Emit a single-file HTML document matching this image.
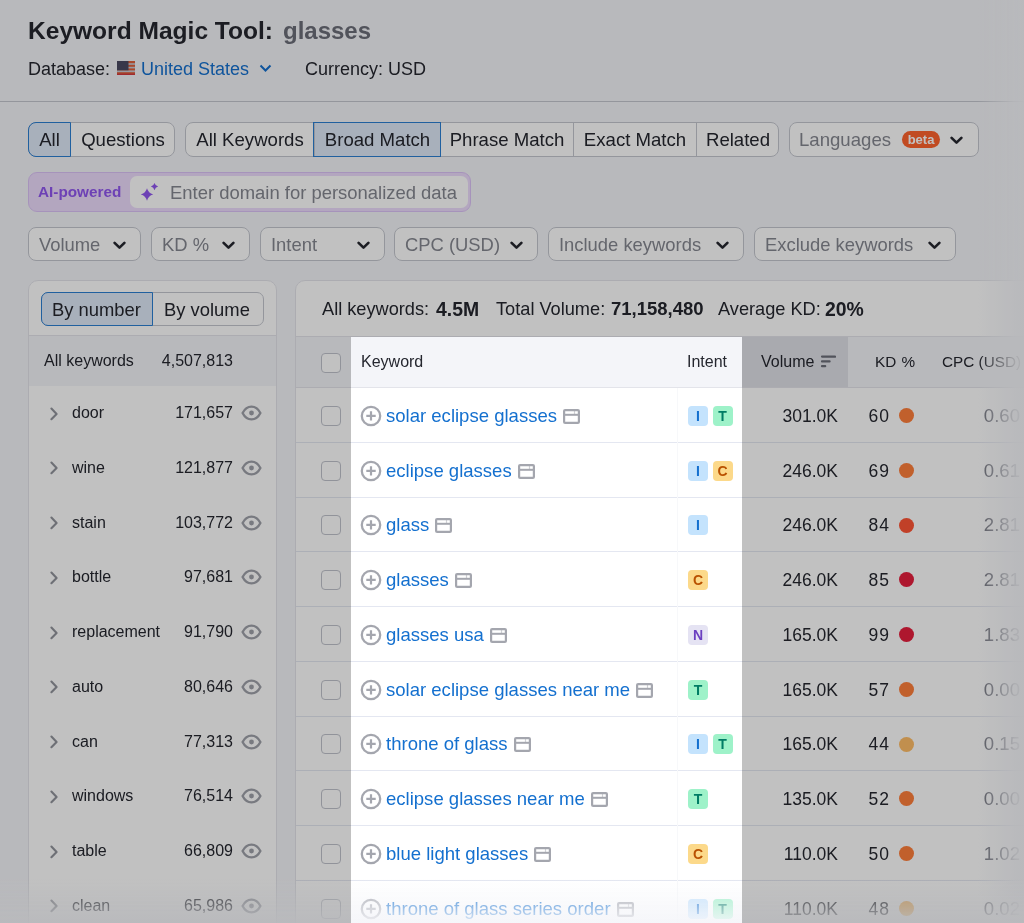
<!DOCTYPE html>
<html><head><meta charset="utf-8">
<style>
*{box-sizing:border-box;margin:0;padding:0}
html,body{width:1024px;height:923px;overflow:hidden}
body{will-change:transform;background:#f4f5f9;font-family:"Liberation Sans",sans-serif;color:#25272f;position:relative}
.a{position:absolute;white-space:nowrap}
.btn{position:absolute;height:35px;border:1px solid #c4c7cf;background:#fff;border-radius:8px;font-size:18.6px;line-height:34px;color:#25272f}
.seg{position:absolute;top:0;height:33px;line-height:34px;text-align:center;border-left:1px solid #c4c7cf}
.sel{background:#dfe9f7;outline:1px solid #2b7fd3;z-index:1}
.dd{position:absolute;top:227px;height:34px;border:1px solid #c4c7cf;background:#fff;border-radius:8px;font-size:18px;line-height:33px;color:#858790}
.dd span{position:absolute;left:10px;top:0;font-size:18.4px}
.chev{position:absolute;top:13px;width:13px;height:9px}
</style></head><body>

<!-- header -->
<div class="a" style="left:28px;top:16px;font-size:24.55px;font-weight:700;line-height:30px">Keyword Magic Tool:</div>
<div class="a" style="left:283px;top:16px;font-size:24px;font-weight:700;line-height:30px;color:#6c6e79">glasses</div>
<div class="a" style="left:28px;top:58px;font-size:18px;line-height:22px;color:#25272f">Database:</div>
<svg class="a" style="left:117px;top:61px" width="18" height="14" viewBox="0 0 18 14"><rect width="18" height="14" fill="#e0603a"/><rect y="2.2" width="18" height="1.6" fill="#c9ccd6"/><rect y="5.8" width="18" height="1.6" fill="#c9ccd6"/><rect y="9.4" width="18" height="1.8" fill="#c9ccd6"/><rect y="12.6" width="18" height="1.4" fill="#d43a40"/><rect width="11.5" height="9.3" fill="#4a4a62"/></svg>
<div class="a" style="left:141px;top:58px;font-size:18px;line-height:22px;color:#1470cf">United States</div>
<svg class="a" style="left:259px;top:64px" width="13" height="9" viewBox="0 0 13 9"><path d="M1.5 1.5 L6.5 6.5 L11.5 1.5" fill="none" stroke="#1470cf" stroke-width="2"/></svg>
<div class="a" style="left:305px;top:58px;font-size:18px;line-height:22px">Currency: USD</div>
<div class="a" style="left:0;top:101px;width:1024px;height:1px;background:#c4c7cf"></div>

<!-- buttons row -->
<div class="btn" style="left:28px;top:122px;width:147px">
  <div class="seg sel" style="left:0;width:41px;border-left:0;border-radius:7px 0 0 7px">All</div>
  <div class="seg" style="left:41px;width:105px">Questions</div>
</div>
<div class="btn" style="left:185px;top:122px;width:594px">
  <div class="seg" style="left:0;width:128px;border-left:0">All Keywords</div>
  <div class="seg sel" style="left:128px;width:126px">Broad Match</div>
  <div class="seg" style="left:254px;width:133px">Phrase Match</div>
  <div class="seg" style="left:387px;width:123px">Exact Match</div>
  <div class="seg" style="left:510px;width:83px">Related</div>
</div>
<div class="btn" style="left:789px;top:122px;width:190px;color:#858790">
  <span class="a" style="left:9px;top:0">Languages</span>
  <span class="a" style="left:112px;top:8px;width:38px;height:17px;border-radius:9px;background:#ff642d;color:#fff;font-size:13px;font-weight:700;line-height:17px;text-align:center">beta</span>
  <svg class="chev" style="left:160px" viewBox="0 0 13 9"><path d="M1.6 1.8 L6.5 6.7 L11.4 1.8" fill="none" stroke="#25272f" stroke-width="2.6" stroke-linecap="round" stroke-linejoin="round"/></svg>
</div>

<!-- AI row -->
<div class="a" style="left:28px;top:172px;width:443px;height:40px;border-radius:9px;background:#eddcfd;border:1px solid #dcc3f7"></div>
<div class="a" style="left:38px;top:182px;font-size:15.3px;font-weight:700;line-height:20px;color:#9157f0">AI-powered</div>
<div class="a" style="left:130px;top:176px;width:338px;height:32px;border-radius:7px;background:#fff"></div>
<svg class="a" style="left:134px;top:176px" width="26" height="26" viewBox="0 0 26 26"><path d="M13 12.3 Q14.3 17.2 19.2 18.5 Q14.3 19.8 13 24.7 Q11.7 19.8 6.8 18.5 Q11.7 17.2 13 12.3Z M20.5 7 Q21.3 9.8 24.1 10.6 Q21.3 11.4 20.5 14.2 Q19.7 11.4 16.9 10.6 Q19.7 9.8 20.5 7Z" fill="#9157f0"/></svg>
<div class="a" style="left:170px;top:181.5px;font-size:18.45px;line-height:22px;color:#858790">Enter domain for personalized data</div>

<!-- filter row -->
<div class="dd" style="left:28px;width:113px"><span>Volume</span><svg class="chev" style="left:84px" viewBox="0 0 13 9"><path d="M1.6 1.8 L6.5 6.7 L11.4 1.8" fill="none" stroke="#25272f" stroke-width="2.6" stroke-linecap="round" stroke-linejoin="round"/></svg></div>
<div class="dd" style="left:151px;width:99px"><span>KD %</span><svg class="chev" style="left:70px" viewBox="0 0 13 9"><path d="M1.6 1.8 L6.5 6.7 L11.4 1.8" fill="none" stroke="#25272f" stroke-width="2.6" stroke-linecap="round" stroke-linejoin="round"/></svg></div>
<div class="dd" style="left:260px;width:125px"><span>Intent</span><svg class="chev" style="left:96px" viewBox="0 0 13 9"><path d="M1.6 1.8 L6.5 6.7 L11.4 1.8" fill="none" stroke="#25272f" stroke-width="2.6" stroke-linecap="round" stroke-linejoin="round"/></svg></div>
<div class="dd" style="left:394px;width:144px"><span>CPC (USD)</span><svg class="chev" style="left:115px" viewBox="0 0 13 9"><path d="M1.6 1.8 L6.5 6.7 L11.4 1.8" fill="none" stroke="#25272f" stroke-width="2.6" stroke-linecap="round" stroke-linejoin="round"/></svg></div>
<div class="dd" style="left:548px;width:196px"><span>Include keywords</span><svg class="chev" style="left:167px" viewBox="0 0 13 9"><path d="M1.6 1.8 L6.5 6.7 L11.4 1.8" fill="none" stroke="#25272f" stroke-width="2.6" stroke-linecap="round" stroke-linejoin="round"/></svg></div>
<div class="dd" style="left:754px;width:202px"><span>Exclude keywords</span><svg class="chev" style="left:173px" viewBox="0 0 13 9"><path d="M1.6 1.8 L6.5 6.7 L11.4 1.8" fill="none" stroke="#25272f" stroke-width="2.6" stroke-linecap="round" stroke-linejoin="round"/></svg></div>


<div class="a" style="left:28px;top:280px;width:249px;height:700px;background:#fff;border:1px solid #e3e4ea;border-radius:10px"></div>
<div class="a" style="left:41px;top:292px;width:223px;height:34px;border:1px solid #c4c7cf;border-radius:7px;background:#fff"></div>
<div class="a" style="left:41px;top:292px;width:112px;height:34px;border:1px solid #2b7fd3;border-radius:7px 0 0 7px;background:#dfe9f7"></div>
<div class="a" style="left:52px;top:298px;font-size:18.4px;line-height:24px">By number</div>
<div class="a" style="left:164px;top:298px;font-size:18.4px;line-height:24px">By volume</div>
<div class="a" style="left:29px;top:335px;width:247px;height:51px;background:#f4f5f9;border-top:1px solid #e3e4ea"></div>
<div class="a" style="left:44px;top:351px;font-size:16px;line-height:20px">All keywords</div>
<div class="a" style="left:132px;top:351px;width:101px;text-align:right;font-size:16px;line-height:20px">4,507,813</div>
<svg class="a" style="left:49px;top:406.50px" width="10" height="14" viewBox="0 0 10 14"><path d="M2.4 1.6 L7.6 6.9 L2.4 12.2" fill="none" stroke="#92949c" stroke-width="2.1" stroke-linecap="round" stroke-linejoin="round"/></svg>
<div class="a" style="left:72px;top:403.00px;font-size:16px;line-height:20px">door</div>
<div class="a" style="left:132px;top:403.00px;width:101px;text-align:right;font-size:16px;line-height:20px">171,657</div>
<svg class="a" style="left:241px;top:405.00px" width="21" height="16" viewBox="0 0 21 16"><path d="M1.6 8 C3.8 3.6 7 1.6 10.5 1.6 C14 1.6 17.2 3.6 19.4 8 C17.2 12.4 14 14.4 10.5 14.4 C7 14.4 3.8 12.4 1.6 8Z" fill="none" stroke="#9fa1aa" stroke-width="2.3"/><circle cx="10.5" cy="8" r="2.4" fill="#9fa1aa"/></svg>
<svg class="a" style="left:49px;top:461.25px" width="10" height="14" viewBox="0 0 10 14"><path d="M2.4 1.6 L7.6 6.9 L2.4 12.2" fill="none" stroke="#92949c" stroke-width="2.1" stroke-linecap="round" stroke-linejoin="round"/></svg>
<div class="a" style="left:72px;top:457.75px;font-size:16px;line-height:20px">wine</div>
<div class="a" style="left:132px;top:457.75px;width:101px;text-align:right;font-size:16px;line-height:20px">121,877</div>
<svg class="a" style="left:241px;top:459.75px" width="21" height="16" viewBox="0 0 21 16"><path d="M1.6 8 C3.8 3.6 7 1.6 10.5 1.6 C14 1.6 17.2 3.6 19.4 8 C17.2 12.4 14 14.4 10.5 14.4 C7 14.4 3.8 12.4 1.6 8Z" fill="none" stroke="#9fa1aa" stroke-width="2.3"/><circle cx="10.5" cy="8" r="2.4" fill="#9fa1aa"/></svg>
<svg class="a" style="left:49px;top:516.00px" width="10" height="14" viewBox="0 0 10 14"><path d="M2.4 1.6 L7.6 6.9 L2.4 12.2" fill="none" stroke="#92949c" stroke-width="2.1" stroke-linecap="round" stroke-linejoin="round"/></svg>
<div class="a" style="left:72px;top:512.50px;font-size:16px;line-height:20px">stain</div>
<div class="a" style="left:132px;top:512.50px;width:101px;text-align:right;font-size:16px;line-height:20px">103,772</div>
<svg class="a" style="left:241px;top:514.50px" width="21" height="16" viewBox="0 0 21 16"><path d="M1.6 8 C3.8 3.6 7 1.6 10.5 1.6 C14 1.6 17.2 3.6 19.4 8 C17.2 12.4 14 14.4 10.5 14.4 C7 14.4 3.8 12.4 1.6 8Z" fill="none" stroke="#9fa1aa" stroke-width="2.3"/><circle cx="10.5" cy="8" r="2.4" fill="#9fa1aa"/></svg>
<svg class="a" style="left:49px;top:570.75px" width="10" height="14" viewBox="0 0 10 14"><path d="M2.4 1.6 L7.6 6.9 L2.4 12.2" fill="none" stroke="#92949c" stroke-width="2.1" stroke-linecap="round" stroke-linejoin="round"/></svg>
<div class="a" style="left:72px;top:567.25px;font-size:16px;line-height:20px">bottle</div>
<div class="a" style="left:132px;top:567.25px;width:101px;text-align:right;font-size:16px;line-height:20px">97,681</div>
<svg class="a" style="left:241px;top:569.25px" width="21" height="16" viewBox="0 0 21 16"><path d="M1.6 8 C3.8 3.6 7 1.6 10.5 1.6 C14 1.6 17.2 3.6 19.4 8 C17.2 12.4 14 14.4 10.5 14.4 C7 14.4 3.8 12.4 1.6 8Z" fill="none" stroke="#9fa1aa" stroke-width="2.3"/><circle cx="10.5" cy="8" r="2.4" fill="#9fa1aa"/></svg>
<svg class="a" style="left:49px;top:625.50px" width="10" height="14" viewBox="0 0 10 14"><path d="M2.4 1.6 L7.6 6.9 L2.4 12.2" fill="none" stroke="#92949c" stroke-width="2.1" stroke-linecap="round" stroke-linejoin="round"/></svg>
<div class="a" style="left:72px;top:622.00px;font-size:16px;line-height:20px">replacement</div>
<div class="a" style="left:132px;top:622.00px;width:101px;text-align:right;font-size:16px;line-height:20px">91,790</div>
<svg class="a" style="left:241px;top:624.00px" width="21" height="16" viewBox="0 0 21 16"><path d="M1.6 8 C3.8 3.6 7 1.6 10.5 1.6 C14 1.6 17.2 3.6 19.4 8 C17.2 12.4 14 14.4 10.5 14.4 C7 14.4 3.8 12.4 1.6 8Z" fill="none" stroke="#9fa1aa" stroke-width="2.3"/><circle cx="10.5" cy="8" r="2.4" fill="#9fa1aa"/></svg>
<svg class="a" style="left:49px;top:680.25px" width="10" height="14" viewBox="0 0 10 14"><path d="M2.4 1.6 L7.6 6.9 L2.4 12.2" fill="none" stroke="#92949c" stroke-width="2.1" stroke-linecap="round" stroke-linejoin="round"/></svg>
<div class="a" style="left:72px;top:676.75px;font-size:16px;line-height:20px">auto</div>
<div class="a" style="left:132px;top:676.75px;width:101px;text-align:right;font-size:16px;line-height:20px">80,646</div>
<svg class="a" style="left:241px;top:678.75px" width="21" height="16" viewBox="0 0 21 16"><path d="M1.6 8 C3.8 3.6 7 1.6 10.5 1.6 C14 1.6 17.2 3.6 19.4 8 C17.2 12.4 14 14.4 10.5 14.4 C7 14.4 3.8 12.4 1.6 8Z" fill="none" stroke="#9fa1aa" stroke-width="2.3"/><circle cx="10.5" cy="8" r="2.4" fill="#9fa1aa"/></svg>
<svg class="a" style="left:49px;top:735.00px" width="10" height="14" viewBox="0 0 10 14"><path d="M2.4 1.6 L7.6 6.9 L2.4 12.2" fill="none" stroke="#92949c" stroke-width="2.1" stroke-linecap="round" stroke-linejoin="round"/></svg>
<div class="a" style="left:72px;top:731.50px;font-size:16px;line-height:20px">can</div>
<div class="a" style="left:132px;top:731.50px;width:101px;text-align:right;font-size:16px;line-height:20px">77,313</div>
<svg class="a" style="left:241px;top:733.50px" width="21" height="16" viewBox="0 0 21 16"><path d="M1.6 8 C3.8 3.6 7 1.6 10.5 1.6 C14 1.6 17.2 3.6 19.4 8 C17.2 12.4 14 14.4 10.5 14.4 C7 14.4 3.8 12.4 1.6 8Z" fill="none" stroke="#9fa1aa" stroke-width="2.3"/><circle cx="10.5" cy="8" r="2.4" fill="#9fa1aa"/></svg>
<svg class="a" style="left:49px;top:789.75px" width="10" height="14" viewBox="0 0 10 14"><path d="M2.4 1.6 L7.6 6.9 L2.4 12.2" fill="none" stroke="#92949c" stroke-width="2.1" stroke-linecap="round" stroke-linejoin="round"/></svg>
<div class="a" style="left:72px;top:786.25px;font-size:16px;line-height:20px">windows</div>
<div class="a" style="left:132px;top:786.25px;width:101px;text-align:right;font-size:16px;line-height:20px">76,514</div>
<svg class="a" style="left:241px;top:788.25px" width="21" height="16" viewBox="0 0 21 16"><path d="M1.6 8 C3.8 3.6 7 1.6 10.5 1.6 C14 1.6 17.2 3.6 19.4 8 C17.2 12.4 14 14.4 10.5 14.4 C7 14.4 3.8 12.4 1.6 8Z" fill="none" stroke="#9fa1aa" stroke-width="2.3"/><circle cx="10.5" cy="8" r="2.4" fill="#9fa1aa"/></svg>
<svg class="a" style="left:49px;top:844.50px" width="10" height="14" viewBox="0 0 10 14"><path d="M2.4 1.6 L7.6 6.9 L2.4 12.2" fill="none" stroke="#92949c" stroke-width="2.1" stroke-linecap="round" stroke-linejoin="round"/></svg>
<div class="a" style="left:72px;top:841.00px;font-size:16px;line-height:20px">table</div>
<div class="a" style="left:132px;top:841.00px;width:101px;text-align:right;font-size:16px;line-height:20px">66,809</div>
<svg class="a" style="left:241px;top:843.00px" width="21" height="16" viewBox="0 0 21 16"><path d="M1.6 8 C3.8 3.6 7 1.6 10.5 1.6 C14 1.6 17.2 3.6 19.4 8 C17.2 12.4 14 14.4 10.5 14.4 C7 14.4 3.8 12.4 1.6 8Z" fill="none" stroke="#9fa1aa" stroke-width="2.3"/><circle cx="10.5" cy="8" r="2.4" fill="#9fa1aa"/></svg>
<svg class="a" style="left:49px;top:899.25px" width="10" height="14" viewBox="0 0 10 14"><path d="M2.4 1.6 L7.6 6.9 L2.4 12.2" fill="none" stroke="#92949c" stroke-width="2.1" stroke-linecap="round" stroke-linejoin="round"/></svg>
<div class="a" style="left:72px;top:895.75px;font-size:16px;line-height:20px">clean</div>
<div class="a" style="left:132px;top:895.75px;width:101px;text-align:right;font-size:16px;line-height:20px">65,986</div>
<svg class="a" style="left:241px;top:897.75px" width="21" height="16" viewBox="0 0 21 16"><path d="M1.6 8 C3.8 3.6 7 1.6 10.5 1.6 C14 1.6 17.2 3.6 19.4 8 C17.2 12.4 14 14.4 10.5 14.4 C7 14.4 3.8 12.4 1.6 8Z" fill="none" stroke="#9fa1aa" stroke-width="2.3"/><circle cx="10.5" cy="8" r="2.4" fill="#9fa1aa"/></svg>
<div class="a" style="left:295px;top:280px;width:800px;height:700px;background:#fff;border:1px solid #e3e4ea;border-radius:10px"></div>
<div class="a" style="left:322px;top:298px;font-size:18.2px;line-height:22px">All keywords:</div>
<div class="a" style="left:436px;top:298px;font-size:19.4px;line-height:22px;font-weight:700">4.5M</div>
<div class="a" style="left:496px;top:298px;font-size:18.2px;line-height:22px">Total Volume:</div>
<div class="a" style="left:611px;top:298px;font-size:18.5px;line-height:22px;font-weight:700">71,158,480</div>
<div class="a" style="left:718px;top:298px;font-size:18.2px;line-height:22px">Average KD:</div>
<div class="a" style="left:825px;top:298px;font-size:19.4px;line-height:22px;font-weight:700">20%</div>
<div class="a" style="left:296px;top:336px;width:800px;height:52px;background:#f4f5f9;border-top:1px solid #e3e4ea;border-bottom:1px solid #e3e4ea"></div>
<div class="a" style="left:742px;top:337px;width:106px;height:50px;background:#e0e1e8"></div>
<div class="a" style="left:321px;top:353px;width:20px;height:20px;border:1.5px solid #c0c3cc;border-radius:4px;background:#fff"></div>
<div class="a" style="left:361px;top:351.5px;font-size:16px;line-height:20px">Keyword</div>
<div class="a" style="left:687px;top:351.5px;font-size:16px;line-height:20px">Intent</div>
<div class="a" style="left:761px;top:351.5px;font-size:16px;line-height:20px">Volume</div>
<svg class="a" style="left:820px;top:354.5px" width="16" height="13" viewBox="0 0 16 13"><path d="M2 1.6H15M2 6.4H9.6M2 11.2H5.2" stroke="#6c6e79" stroke-width="2.2" stroke-linecap="round"/></svg>
<div class="a" style="left:875px;top:352px;font-size:15.3px;line-height:20px;word-spacing:1px">KD %</div>
<div class="a" style="left:942px;top:352px;font-size:15.3px;line-height:20px">CPC (USD)</div>
<div class="a" style="left:296px;top:441.75px;width:800px;height:1px;background:#e4e7f1"></div>
<div class="a" style="left:321px;top:405.90px;width:20px;height:20px;border:1.5px solid #c0c3cc;border-radius:4px;background:#fff"></div>
<svg class="a" style="left:360px;top:404.90px" width="22" height="22" viewBox="0 0 22 22"><circle cx="11" cy="11" r="9.2" fill="none" stroke="#a4a6ae" stroke-width="2.3"/><path d="M11 6.2V15.6M6.3 10.9H15.7" stroke="#a4a6ae" stroke-width="2.2"/></svg>
<div class="a" style="left:386px;top:404.90px;font-size:18.55px;line-height:22px;color:#1470cf"><span>solar eclipse glasses</span><svg style="display:inline-block;vertical-align:-2px;margin-left:6px" width="17" height="15" viewBox="0 0 17 15"><rect x="1.1" y="1.1" width="14.8" height="12.8" rx="1" fill="none" stroke="#a4a6ae" stroke-width="2.2"/><path d="M1 5.8H16" stroke="#a4a6ae" stroke-width="2"/><path d="M11.5 1V5.5" stroke="#a4a6ae" stroke-width="1.2" opacity=".5"/></svg></div>
<div class="a" style="left:688.0px;top:405.90px;width:20px;height:20px;border-radius:4px;background:#c4e3fd;color:#1470cf;font-size:14px;font-weight:700;line-height:20px;text-align:center">I</div>
<div class="a" style="left:712.6px;top:405.90px;width:20px;height:20px;border-radius:4px;background:#9ef2c9;color:#007c65;font-size:14px;font-weight:700;line-height:20px;text-align:center">T</div>
<div class="a" style="left:738px;top:404.90px;width:100px;text-align:right;font-size:17.5px;line-height:22px">301.0K</div>
<div class="a" style="left:840px;width:50px;text-align:right;top:404.90px;font-size:17.5px;line-height:22px;letter-spacing:1px">60</div>
<div class="a" style="left:899px;top:408.10px;width:15px;height:15px;border-radius:50%;background:#ff7f3b"></div>
<div class="a" style="left:921px;top:404.90px;width:99px;text-align:right;font-size:18.6px;line-height:22px;color:#6c6e79">0.60</div>
<div class="a" style="left:296px;top:496.50px;width:800px;height:1px;background:#e4e7f1"></div>
<div class="a" style="left:321px;top:460.65px;width:20px;height:20px;border:1.5px solid #c0c3cc;border-radius:4px;background:#fff"></div>
<svg class="a" style="left:360px;top:459.65px" width="22" height="22" viewBox="0 0 22 22"><circle cx="11" cy="11" r="9.2" fill="none" stroke="#a4a6ae" stroke-width="2.3"/><path d="M11 6.2V15.6M6.3 10.9H15.7" stroke="#a4a6ae" stroke-width="2.2"/></svg>
<div class="a" style="left:386px;top:459.65px;font-size:18.55px;line-height:22px;color:#1470cf"><span>eclipse glasses</span><svg style="display:inline-block;vertical-align:-2px;margin-left:6px" width="17" height="15" viewBox="0 0 17 15"><rect x="1.1" y="1.1" width="14.8" height="12.8" rx="1" fill="none" stroke="#a4a6ae" stroke-width="2.2"/><path d="M1 5.8H16" stroke="#a4a6ae" stroke-width="2"/><path d="M11.5 1V5.5" stroke="#a4a6ae" stroke-width="1.2" opacity=".5"/></svg></div>
<div class="a" style="left:688.0px;top:460.65px;width:20px;height:20px;border-radius:4px;background:#c4e3fd;color:#1470cf;font-size:14px;font-weight:700;line-height:20px;text-align:center">I</div>
<div class="a" style="left:712.6px;top:460.65px;width:20px;height:20px;border-radius:4px;background:#fcd98a;color:#b95100;font-size:14px;font-weight:700;line-height:20px;text-align:center">C</div>
<div class="a" style="left:738px;top:459.65px;width:100px;text-align:right;font-size:17.5px;line-height:22px">246.0K</div>
<div class="a" style="left:840px;width:50px;text-align:right;top:459.65px;font-size:17.5px;line-height:22px;letter-spacing:1px">69</div>
<div class="a" style="left:899px;top:462.85px;width:15px;height:15px;border-radius:50%;background:#ff7f3b"></div>
<div class="a" style="left:921px;top:459.65px;width:99px;text-align:right;font-size:18.6px;line-height:22px;color:#6c6e79">0.61</div>
<div class="a" style="left:296px;top:551.25px;width:800px;height:1px;background:#e4e7f1"></div>
<div class="a" style="left:321px;top:515.40px;width:20px;height:20px;border:1.5px solid #c0c3cc;border-radius:4px;background:#fff"></div>
<svg class="a" style="left:360px;top:514.40px" width="22" height="22" viewBox="0 0 22 22"><circle cx="11" cy="11" r="9.2" fill="none" stroke="#a4a6ae" stroke-width="2.3"/><path d="M11 6.2V15.6M6.3 10.9H15.7" stroke="#a4a6ae" stroke-width="2.2"/></svg>
<div class="a" style="left:386px;top:514.40px;font-size:18.55px;line-height:22px;color:#1470cf"><span>glass</span><svg style="display:inline-block;vertical-align:-2px;margin-left:6px" width="17" height="15" viewBox="0 0 17 15"><rect x="1.1" y="1.1" width="14.8" height="12.8" rx="1" fill="none" stroke="#a4a6ae" stroke-width="2.2"/><path d="M1 5.8H16" stroke="#a4a6ae" stroke-width="2"/><path d="M11.5 1V5.5" stroke="#a4a6ae" stroke-width="1.2" opacity=".5"/></svg></div>
<div class="a" style="left:688.0px;top:515.40px;width:20px;height:20px;border-radius:4px;background:#c4e3fd;color:#1470cf;font-size:14px;font-weight:700;line-height:20px;text-align:center">I</div>
<div class="a" style="left:738px;top:514.40px;width:100px;text-align:right;font-size:17.5px;line-height:22px">246.0K</div>
<div class="a" style="left:840px;width:50px;text-align:right;top:514.40px;font-size:17.5px;line-height:22px;letter-spacing:1px">84</div>
<div class="a" style="left:899px;top:517.60px;width:15px;height:15px;border-radius:50%;background:#ff5535"></div>
<div class="a" style="left:921px;top:514.40px;width:99px;text-align:right;font-size:18.6px;line-height:22px;color:#6c6e79">2.81</div>
<div class="a" style="left:296px;top:606.00px;width:800px;height:1px;background:#e4e7f1"></div>
<div class="a" style="left:321px;top:570.15px;width:20px;height:20px;border:1.5px solid #c0c3cc;border-radius:4px;background:#fff"></div>
<svg class="a" style="left:360px;top:569.15px" width="22" height="22" viewBox="0 0 22 22"><circle cx="11" cy="11" r="9.2" fill="none" stroke="#a4a6ae" stroke-width="2.3"/><path d="M11 6.2V15.6M6.3 10.9H15.7" stroke="#a4a6ae" stroke-width="2.2"/></svg>
<div class="a" style="left:386px;top:569.15px;font-size:18.55px;line-height:22px;color:#1470cf"><span>glasses</span><svg style="display:inline-block;vertical-align:-2px;margin-left:6px" width="17" height="15" viewBox="0 0 17 15"><rect x="1.1" y="1.1" width="14.8" height="12.8" rx="1" fill="none" stroke="#a4a6ae" stroke-width="2.2"/><path d="M1 5.8H16" stroke="#a4a6ae" stroke-width="2"/><path d="M11.5 1V5.5" stroke="#a4a6ae" stroke-width="1.2" opacity=".5"/></svg></div>
<div class="a" style="left:688.0px;top:570.15px;width:20px;height:20px;border-radius:4px;background:#fcd98a;color:#b95100;font-size:14px;font-weight:700;line-height:20px;text-align:center">C</div>
<div class="a" style="left:738px;top:569.15px;width:100px;text-align:right;font-size:17.5px;line-height:22px">246.0K</div>
<div class="a" style="left:840px;width:50px;text-align:right;top:569.15px;font-size:17.5px;line-height:22px;letter-spacing:1px">85</div>
<div class="a" style="left:899px;top:572.35px;width:15px;height:15px;border-radius:50%;background:#e61f3e"></div>
<div class="a" style="left:921px;top:569.15px;width:99px;text-align:right;font-size:18.6px;line-height:22px;color:#6c6e79">2.81</div>
<div class="a" style="left:296px;top:660.75px;width:800px;height:1px;background:#e4e7f1"></div>
<div class="a" style="left:321px;top:624.90px;width:20px;height:20px;border:1.5px solid #c0c3cc;border-radius:4px;background:#fff"></div>
<svg class="a" style="left:360px;top:623.90px" width="22" height="22" viewBox="0 0 22 22"><circle cx="11" cy="11" r="9.2" fill="none" stroke="#a4a6ae" stroke-width="2.3"/><path d="M11 6.2V15.6M6.3 10.9H15.7" stroke="#a4a6ae" stroke-width="2.2"/></svg>
<div class="a" style="left:386px;top:623.90px;font-size:18.55px;line-height:22px;color:#1470cf"><span>glasses usa</span><svg style="display:inline-block;vertical-align:-2px;margin-left:6px" width="17" height="15" viewBox="0 0 17 15"><rect x="1.1" y="1.1" width="14.8" height="12.8" rx="1" fill="none" stroke="#a4a6ae" stroke-width="2.2"/><path d="M1 5.8H16" stroke="#a4a6ae" stroke-width="2"/><path d="M11.5 1V5.5" stroke="#a4a6ae" stroke-width="1.2" opacity=".5"/></svg></div>
<div class="a" style="left:688.0px;top:624.90px;width:20px;height:20px;border-radius:4px;background:#e5e3f3;color:#6b3fc0;font-size:14px;font-weight:700;line-height:20px;text-align:center">N</div>
<div class="a" style="left:738px;top:623.90px;width:100px;text-align:right;font-size:17.5px;line-height:22px">165.0K</div>
<div class="a" style="left:840px;width:50px;text-align:right;top:623.90px;font-size:17.5px;line-height:22px;letter-spacing:1px">99</div>
<div class="a" style="left:899px;top:627.10px;width:15px;height:15px;border-radius:50%;background:#e61f3e"></div>
<div class="a" style="left:921px;top:623.90px;width:99px;text-align:right;font-size:18.6px;line-height:22px;color:#6c6e79">1.83</div>
<div class="a" style="left:296px;top:715.50px;width:800px;height:1px;background:#e4e7f1"></div>
<div class="a" style="left:321px;top:679.65px;width:20px;height:20px;border:1.5px solid #c0c3cc;border-radius:4px;background:#fff"></div>
<svg class="a" style="left:360px;top:678.65px" width="22" height="22" viewBox="0 0 22 22"><circle cx="11" cy="11" r="9.2" fill="none" stroke="#a4a6ae" stroke-width="2.3"/><path d="M11 6.2V15.6M6.3 10.9H15.7" stroke="#a4a6ae" stroke-width="2.2"/></svg>
<div class="a" style="left:386px;top:678.65px;font-size:18.55px;line-height:22px;color:#1470cf"><span>solar eclipse glasses near me</span><svg style="display:inline-block;vertical-align:-2px;margin-left:6px" width="17" height="15" viewBox="0 0 17 15"><rect x="1.1" y="1.1" width="14.8" height="12.8" rx="1" fill="none" stroke="#a4a6ae" stroke-width="2.2"/><path d="M1 5.8H16" stroke="#a4a6ae" stroke-width="2"/><path d="M11.5 1V5.5" stroke="#a4a6ae" stroke-width="1.2" opacity=".5"/></svg></div>
<div class="a" style="left:688.0px;top:679.65px;width:20px;height:20px;border-radius:4px;background:#9ef2c9;color:#007c65;font-size:14px;font-weight:700;line-height:20px;text-align:center">T</div>
<div class="a" style="left:738px;top:678.65px;width:100px;text-align:right;font-size:17.5px;line-height:22px">165.0K</div>
<div class="a" style="left:840px;width:50px;text-align:right;top:678.65px;font-size:17.5px;line-height:22px;letter-spacing:1px">57</div>
<div class="a" style="left:899px;top:681.85px;width:15px;height:15px;border-radius:50%;background:#ff7f3b"></div>
<div class="a" style="left:921px;top:678.65px;width:99px;text-align:right;font-size:18.6px;line-height:22px;color:#6c6e79">0.00</div>
<div class="a" style="left:296px;top:770.25px;width:800px;height:1px;background:#e4e7f1"></div>
<div class="a" style="left:321px;top:734.40px;width:20px;height:20px;border:1.5px solid #c0c3cc;border-radius:4px;background:#fff"></div>
<svg class="a" style="left:360px;top:733.40px" width="22" height="22" viewBox="0 0 22 22"><circle cx="11" cy="11" r="9.2" fill="none" stroke="#a4a6ae" stroke-width="2.3"/><path d="M11 6.2V15.6M6.3 10.9H15.7" stroke="#a4a6ae" stroke-width="2.2"/></svg>
<div class="a" style="left:386px;top:733.40px;font-size:18.55px;line-height:22px;color:#1470cf"><span>throne of glass</span><svg style="display:inline-block;vertical-align:-2px;margin-left:6px" width="17" height="15" viewBox="0 0 17 15"><rect x="1.1" y="1.1" width="14.8" height="12.8" rx="1" fill="none" stroke="#a4a6ae" stroke-width="2.2"/><path d="M1 5.8H16" stroke="#a4a6ae" stroke-width="2"/><path d="M11.5 1V5.5" stroke="#a4a6ae" stroke-width="1.2" opacity=".5"/></svg></div>
<div class="a" style="left:688.0px;top:734.40px;width:20px;height:20px;border-radius:4px;background:#c4e3fd;color:#1470cf;font-size:14px;font-weight:700;line-height:20px;text-align:center">I</div>
<div class="a" style="left:712.6px;top:734.40px;width:20px;height:20px;border-radius:4px;background:#9ef2c9;color:#007c65;font-size:14px;font-weight:700;line-height:20px;text-align:center">T</div>
<div class="a" style="left:738px;top:733.40px;width:100px;text-align:right;font-size:17.5px;line-height:22px">165.0K</div>
<div class="a" style="left:840px;width:50px;text-align:right;top:733.40px;font-size:17.5px;line-height:22px;letter-spacing:1px">44</div>
<div class="a" style="left:899px;top:736.60px;width:15px;height:15px;border-radius:50%;background:#ffbe68"></div>
<div class="a" style="left:921px;top:733.40px;width:99px;text-align:right;font-size:18.6px;line-height:22px;color:#6c6e79">0.15</div>
<div class="a" style="left:296px;top:825.00px;width:800px;height:1px;background:#e4e7f1"></div>
<div class="a" style="left:321px;top:789.15px;width:20px;height:20px;border:1.5px solid #c0c3cc;border-radius:4px;background:#fff"></div>
<svg class="a" style="left:360px;top:788.15px" width="22" height="22" viewBox="0 0 22 22"><circle cx="11" cy="11" r="9.2" fill="none" stroke="#a4a6ae" stroke-width="2.3"/><path d="M11 6.2V15.6M6.3 10.9H15.7" stroke="#a4a6ae" stroke-width="2.2"/></svg>
<div class="a" style="left:386px;top:788.15px;font-size:18.55px;line-height:22px;color:#1470cf"><span>eclipse glasses near me</span><svg style="display:inline-block;vertical-align:-2px;margin-left:6px" width="17" height="15" viewBox="0 0 17 15"><rect x="1.1" y="1.1" width="14.8" height="12.8" rx="1" fill="none" stroke="#a4a6ae" stroke-width="2.2"/><path d="M1 5.8H16" stroke="#a4a6ae" stroke-width="2"/><path d="M11.5 1V5.5" stroke="#a4a6ae" stroke-width="1.2" opacity=".5"/></svg></div>
<div class="a" style="left:688.0px;top:789.15px;width:20px;height:20px;border-radius:4px;background:#9ef2c9;color:#007c65;font-size:14px;font-weight:700;line-height:20px;text-align:center">T</div>
<div class="a" style="left:738px;top:788.15px;width:100px;text-align:right;font-size:17.5px;line-height:22px">135.0K</div>
<div class="a" style="left:840px;width:50px;text-align:right;top:788.15px;font-size:17.5px;line-height:22px;letter-spacing:1px">52</div>
<div class="a" style="left:899px;top:791.35px;width:15px;height:15px;border-radius:50%;background:#ff7f3b"></div>
<div class="a" style="left:921px;top:788.15px;width:99px;text-align:right;font-size:18.6px;line-height:22px;color:#6c6e79">0.00</div>
<div class="a" style="left:296px;top:879.75px;width:800px;height:1px;background:#e4e7f1"></div>
<div class="a" style="left:321px;top:843.90px;width:20px;height:20px;border:1.5px solid #c0c3cc;border-radius:4px;background:#fff"></div>
<svg class="a" style="left:360px;top:842.90px" width="22" height="22" viewBox="0 0 22 22"><circle cx="11" cy="11" r="9.2" fill="none" stroke="#a4a6ae" stroke-width="2.3"/><path d="M11 6.2V15.6M6.3 10.9H15.7" stroke="#a4a6ae" stroke-width="2.2"/></svg>
<div class="a" style="left:386px;top:842.90px;font-size:18.55px;line-height:22px;color:#1470cf"><span>blue light glasses</span><svg style="display:inline-block;vertical-align:-2px;margin-left:6px" width="17" height="15" viewBox="0 0 17 15"><rect x="1.1" y="1.1" width="14.8" height="12.8" rx="1" fill="none" stroke="#a4a6ae" stroke-width="2.2"/><path d="M1 5.8H16" stroke="#a4a6ae" stroke-width="2"/><path d="M11.5 1V5.5" stroke="#a4a6ae" stroke-width="1.2" opacity=".5"/></svg></div>
<div class="a" style="left:688.0px;top:843.90px;width:20px;height:20px;border-radius:4px;background:#fcd98a;color:#b95100;font-size:14px;font-weight:700;line-height:20px;text-align:center">C</div>
<div class="a" style="left:738px;top:842.90px;width:100px;text-align:right;font-size:17.5px;line-height:22px">110.0K</div>
<div class="a" style="left:840px;width:50px;text-align:right;top:842.90px;font-size:17.5px;line-height:22px;letter-spacing:1px">50</div>
<div class="a" style="left:899px;top:846.10px;width:15px;height:15px;border-radius:50%;background:#ff7f3b"></div>
<div class="a" style="left:921px;top:842.90px;width:99px;text-align:right;font-size:18.6px;line-height:22px;color:#6c6e79">1.02</div>
<div class="a" style="left:296px;top:934.50px;width:800px;height:1px;background:#e4e7f1"></div>
<div class="a" style="left:321px;top:898.65px;width:20px;height:20px;border:1.5px solid #c0c3cc;border-radius:4px;background:#fff"></div>
<svg class="a" style="left:360px;top:897.65px" width="22" height="22" viewBox="0 0 22 22"><circle cx="11" cy="11" r="9.2" fill="none" stroke="#a4a6ae" stroke-width="2.3"/><path d="M11 6.2V15.6M6.3 10.9H15.7" stroke="#a4a6ae" stroke-width="2.2"/></svg>
<div class="a" style="left:386px;top:897.65px;font-size:18.55px;line-height:22px;color:#1470cf"><span>throne of glass series order</span><svg style="display:inline-block;vertical-align:-2px;margin-left:6px" width="17" height="15" viewBox="0 0 17 15"><rect x="1.1" y="1.1" width="14.8" height="12.8" rx="1" fill="none" stroke="#a4a6ae" stroke-width="2.2"/><path d="M1 5.8H16" stroke="#a4a6ae" stroke-width="2"/><path d="M11.5 1V5.5" stroke="#a4a6ae" stroke-width="1.2" opacity=".5"/></svg></div>
<div class="a" style="left:688.0px;top:898.65px;width:20px;height:20px;border-radius:4px;background:#c4e3fd;color:#1470cf;font-size:14px;font-weight:700;line-height:20px;text-align:center">I</div>
<div class="a" style="left:712.6px;top:898.65px;width:20px;height:20px;border-radius:4px;background:#9ef2c9;color:#007c65;font-size:14px;font-weight:700;line-height:20px;text-align:center">T</div>
<div class="a" style="left:738px;top:897.65px;width:100px;text-align:right;font-size:17.5px;line-height:22px">110.0K</div>
<div class="a" style="left:840px;width:50px;text-align:right;top:897.65px;font-size:17.5px;line-height:22px;letter-spacing:1px">48</div>
<div class="a" style="left:899px;top:900.85px;width:15px;height:15px;border-radius:50%;background:#ffbe68"></div>
<div class="a" style="left:921px;top:897.65px;width:99px;text-align:right;font-size:18.6px;line-height:22px;color:#6c6e79">0.02</div>
<div class="a" style="left:677px;top:388px;width:1px;height:600px;background:#f7f8fa"></div>
<div class="a" style="left:978px;top:0;width:46px;height:923px;background:linear-gradient(90deg,rgba(244,245,249,0),rgba(244,245,249,.88) 80%,rgba(244,245,249,.97));z-index:50"></div>
<div class="a" style="left:0;top:879px;width:1024px;height:44px;background:linear-gradient(180deg,rgba(244,245,249,0),rgba(244,245,249,.9));z-index:50"></div>
<div class="a" style="left:351px;top:337px;width:391px;height:700px;box-shadow:0 0 0 3000px rgba(0,0,0,.245);z-index:100"></div>
</body></html>
